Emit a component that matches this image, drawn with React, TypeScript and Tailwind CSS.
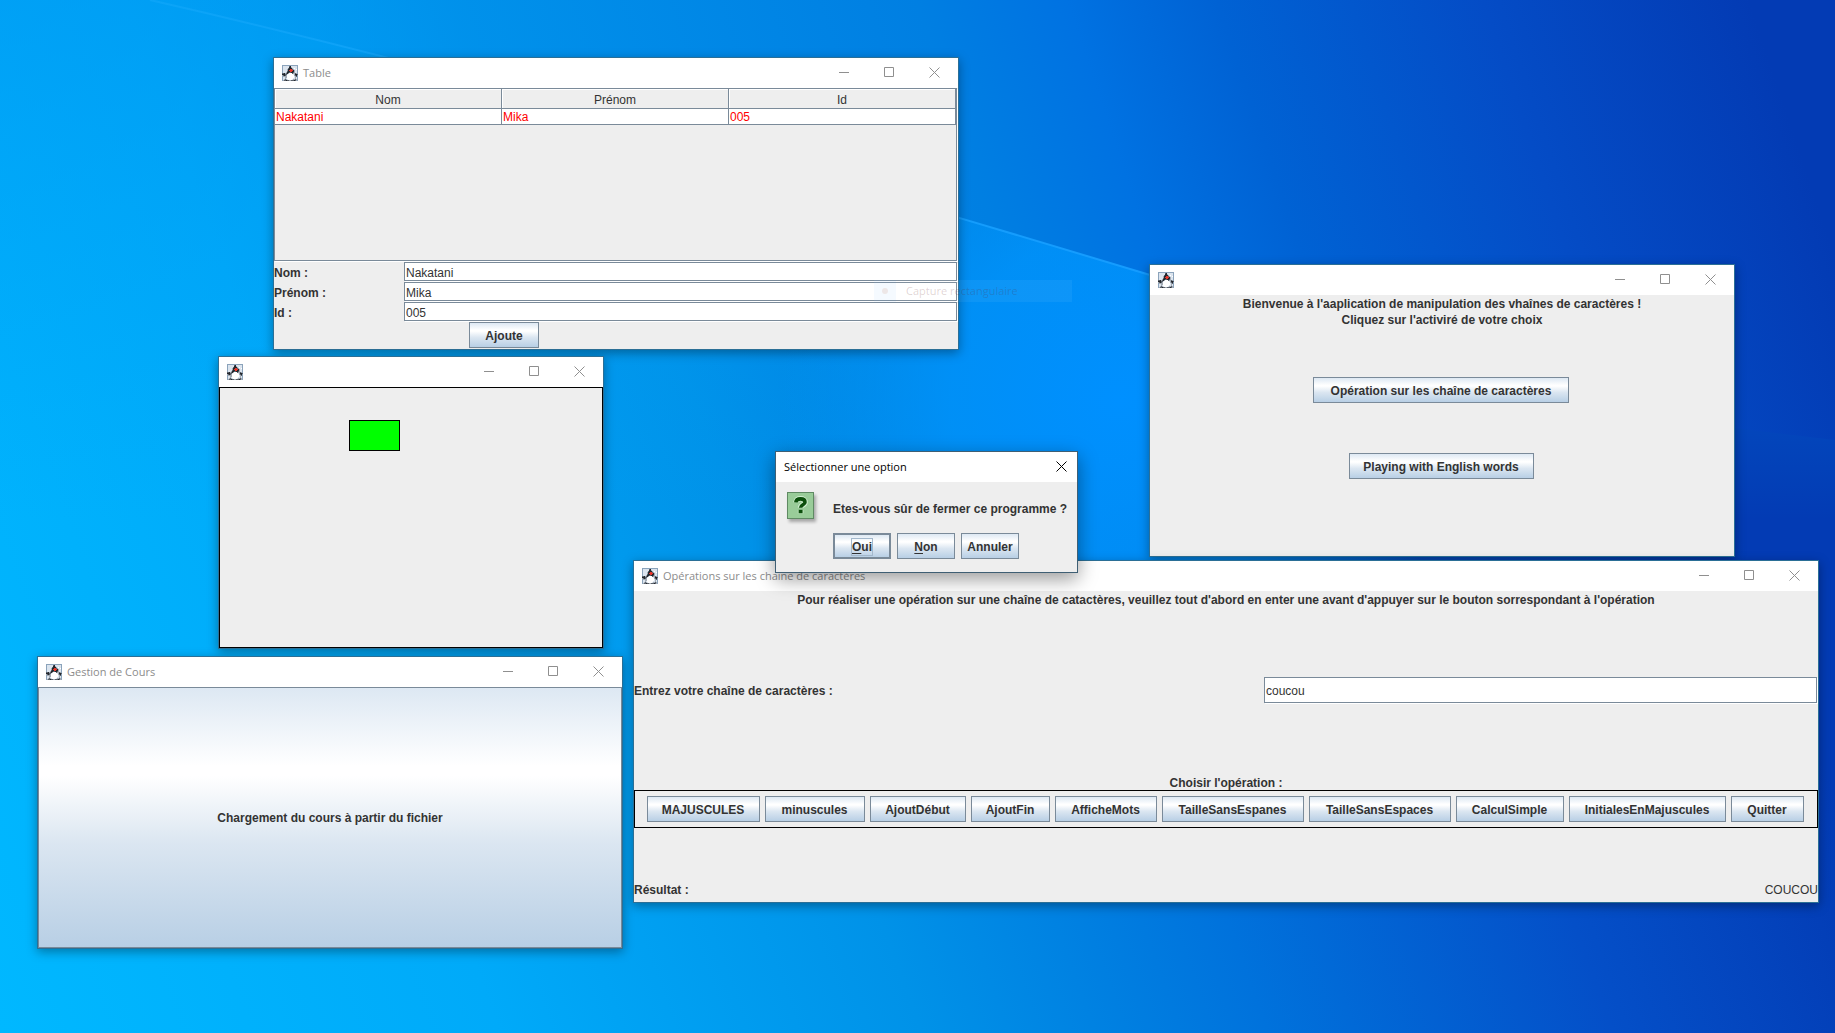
import type { ReactNode } from "react";

const pixels: Record<string, string> = {
  k: "#23272d",
  d: "#596069",
  g: "#a3abb5",
  w: "#ffffff",
  l: "#dbe4ee",
  r: "#e8352a",
  b: "#8ba3bb",
};

const duke = [
  "bbbbbbbbbbbbbbbb",
  "blllllldkllllllb",
  "bllllllkkglllllb",
  "bllllldkkkglwllb",
  "bllllgkkrrdgllwb",
  "bllllgkrrrrkgllb",
  "blllldkkrrkkgllb",
  "blllgkkddkkdgllb",
  "ddkgdkgwwwdggdgb",
  "kkkddlwwwwwlgkkd",
  "gdkdgwwwwwwwgdkb",
  "bggggwwwwwwwlgdb",
  "bllggwwwwwwwlglb",
  "bllglwwwwwwllglb",
  "blgdglwwwwlggdgb",
  "bgddkddggdddkdgb",
];

function JavaIcon() {
  return (
    <svg width="16" height="16" viewBox="0 0 16 16" shapeRendering="crispEdges" aria-hidden="true">
      {duke.flatMap((row, y) =>
        row.split("").map((c, x) => <rect key={`${x}-${y}`} x={x} y={y} width="1" height="1" fill={pixels[c]} />),
      )}
    </svg>
  );
}

function Cross() {
  return (
    <svg width="11" height="11" viewBox="0 0 11 11" fill="none" stroke="currentColor" aria-hidden="true">
      <path d="M.5 .5 10.5 10.5M10.5 .5 .5 10.5" />
    </svg>
  );
}

function WindowControls() {
  return (
    <div className="ml-auto flex h-7 self-start text-[#8f8f8f]">
      <button aria-label="Réduire" className="grid w-[45px] place-items-center">
        <svg width="10" height="10" viewBox="0 0 10 10" stroke="currentColor" aria-hidden="true">
          <path d="M0 5.5H10" />
        </svg>
      </button>
      <button aria-label="Agrandir" className="grid w-[45px] place-items-center">
        <svg width="10" height="10" viewBox="0 0 10 10" fill="none" stroke="currentColor" aria-hidden="true">
          <path d="M.5 .5H9.5V9.5H.5Z" />
        </svg>
      </button>
      <button aria-label="Fermer" className="grid w-[47px] place-items-center">
        <Cross />
      </button>
    </div>
  );
}

function Window({ place, title, children }: { place: string; title?: string; children: ReactNode }) {
  return (
    <section
      className={`absolute flex flex-col border border-[#2b6f96] bg-[#eeeeee] shadow-[0_3px_10px_rgba(0,0,0,0.35)] ${place}`}
    >
      <header className="flex h-[30px] shrink-0 items-center bg-white pb-px pl-2">
        <JavaIcon />
        <h2 className="ml-[5px] pt-px font-['Open_Sans',sans-serif] text-[11px] text-[#8c8c8c]">{title}</h2>
        <WindowControls />
      </header>
      {children}
    </section>
  );
}

const metal =
  "border border-[#7a8a99] bg-[linear-gradient(#dde8f3,#ffffff_30%,#ffffff_34%,#dbe6f1_60%,#b8cfe5)] font-bold";

function MetalButton({ children, size }: { children: ReactNode; size: string }) {
  return <button className={`h-[26px] shrink-0 whitespace-nowrap pt-px ${metal} ${size}`}>{children}</button>;
}

const field =
  "mr-px mb-px min-w-0 flex-1 border border-[#7a8a99] bg-white px-px pt-0.5 shadow-[1px_1px_0_#ffffff] outline-none";

function FormRow({ id, label, value }: { id: string; label: string; value: string }) {
  return (
    <div className="flex h-5">
      <label htmlFor={id} className="w-[130px] pt-px font-bold leading-5">
        {label}
      </label>
      <input id={id} defaultValue={value} className={field} />
    </div>
  );
}

const headCell =
  "h-5 border-r border-b border-[#7a8a99] p-0 pt-0.5 font-normal leading-4 shadow-[inset_1px_1px_0_#ffffff]";
const bodyCell = "h-4 border-r border-b border-[#7a8a99] bg-white p-0 pt-px pl-px leading-[14px] text-[#ff0000]";

function TableWindow() {
  return (
    <Window place="left-[273px] top-[57px] h-[293px] w-[686px]" title="Table">
      <div className="mr-px mb-px flex-1 border border-[#7a8a99] shadow-[1px_1px_0_#ffffff]">
        <table className="w-full table-fixed border-separate border-spacing-0">
          <thead>
            <tr>
              <th className={headCell}>Nom</th>
              <th className={headCell}>Prénom</th>
              <th className={headCell}>Id</th>
            </tr>
          </thead>
          <tbody>
            <tr>
              <td className={bodyCell}>Nakatani</td>
              <td className={bodyCell}>Mika</td>
              <td className={bodyCell}>005</td>
            </tr>
          </tbody>
        </table>
      </div>
      <form onSubmit={(e) => e.preventDefault()}>
        <FormRow id="nom" label="Nom :" value="Nakatani" />
        <FormRow id="prenom" label="Prénom :" value="Mika" />
        <FormRow id="id" label="Id :" value="005" />
        <div className="flex h-[27px] pl-[195px]">
          <MetalButton size="w-[70px]">Ajoute</MetalButton>
        </div>
      </form>
    </Window>
  );
}

function ShapeWindow() {
  return (
    <Window place="left-[218px] top-[356px] h-[293px] w-[386px]">
      <div className="flex-1 border border-black pt-8 pl-[129px]">
        <div className="h-[31px] w-[51px] border border-black bg-[#00ff00]" />
      </div>
    </Window>
  );
}

function CourseWindow() {
  return (
    <Window place="left-[37px] top-[656px] h-[293px] w-[586px]" title="Gestion de Cours">
      <button className={`flex-1 ${metal}`}>Chargement du cours à partir du fichier</button>
    </Window>
  );
}

function WelcomeWindow() {
  return (
    <Window place="left-[1149px] top-[264px] h-[293px] w-[586px]">
      <div className="flex flex-1 flex-col items-center pt-px">
        <p className="text-center font-bold">
          Bienvenue à l'aaplication de manipulation des vhaînes de caractères !
          <br />
          Cliquez sur l'activiré de votre choix
        </p>
        <div className="flex flex-col items-center gap-[50px] pt-[49px] pr-0.5">
          <MetalButton size="w-[256px]">Opération sur les chaîne de caractères</MetalButton>
          <MetalButton size="w-[185px]">Playing with English words</MetalButton>
        </div>
      </div>
    </Window>
  );
}

const operations = [
  ["MAJUSCULES", "w-[113px]"],
  ["minuscules", "w-[100px]"],
  ["AjoutDébut", "w-[96px]"],
  ["AjoutFin", "w-[79px]"],
  ["AfficheMots", "w-[102px]"],
  ["TailleSansEspanes", "w-[142px]"],
  ["TailleSansEspaces", "w-[142px]"],
  ["CalculSimple", "w-[108px]"],
  ["InitialesEnMajuscules", "w-[157px]"],
  ["Quitter", "w-[73px]"],
];

function OperationsWindow() {
  return (
    <Window
      place="left-[633px] top-[560px] h-[343px] w-[1186px]"
      title="Opérations sur les chaine de caractères"
    >
      <div className="flex flex-1 flex-col font-bold">
        <p className="pt-px text-center">
          Pour réaliser une opération sur une chaîne de catactères, veuillez tout d'abord en enter une avant
          d'appuyer sur le bouton sorrespondant à l'opération
        </p>
        <div className="mt-[69px] flex h-[27px]">
          <label htmlFor="chaine" className="w-[630px] pt-px leading-[27px]">
            Entrez votre chaîne de caractères :
          </label>
          <input id="chaine" defaultValue="coucou" className={`font-normal ${field}`} />
        </div>
        <p className="mt-[72px] text-center leading-[14px]">Choisir l'opération :</p>
        <div className="flex h-[38px] items-center justify-center gap-[5px] border border-black pr-0.5">
          {operations.map(([name, width]) => (
            <MetalButton key={name} size={width}>
              {name}
            </MetalButton>
          ))}
        </div>
        <div className="mt-auto flex justify-between pb-1">
          <span>Résultat :</span>
          <span className="font-normal">COUCOU</span>
        </div>
      </div>
    </Window>
  );
}

function ConfirmDialog() {
  return (
    <section
      role="dialog"
      aria-label="Sélectionner une option"
      className="absolute left-[775px] top-[451px] flex h-[122px] w-[303px] flex-col border border-[#3f5f74] bg-[#eeeeee] shadow-[0_6px_18px_rgba(0,0,0,0.4)]"
    >
      <header className="flex h-[30px] items-center bg-white pb-px pl-2">
        <h2 className="pt-px font-['Open_Sans',sans-serif] text-[11px] text-black">Sélectionner une option</h2>
        <button aria-label="Fermer" className="ml-auto grid h-full w-[31px] place-items-center text-black">
          <Cross />
        </button>
      </header>
      <div className="flex gap-[19px] pt-2.5 pl-[11px]">
        <div className="grid size-[27px] place-items-center border border-[#5f8a63] bg-[#99cc99] shadow-[2px_3px_3px_rgba(0,0,0,0.3)]">
          <svg width="19" height="19" viewBox="0 0 19 19" fill="none" aria-hidden="true">
            <g stroke="#d3f0d3" strokeWidth="5.5" strokeLinejoin="round">
              <path d="M5 6.2C5 3.5 7 2.8 9.6 2.8S14 4 14 6.2C14 9 9.6 8.6 9.6 11.8" />
              <path d="M9.6 14V17.4" />
            </g>
            <g stroke="#0b4f0b" strokeWidth="3.6">
              <path d="M4.8 6.4C5 3.6 7 2.9 9.6 2.9S14 4 14 6.2C14 9 9.6 8.6 9.6 11.8" />
              <path d="M9.6 13.8V17.2" strokeWidth="4" />
            </g>
          </svg>
        </div>
        <div className="pt-[9px]">
          <p className="whitespace-nowrap font-bold">Etes-vous sûr de fermer ce programme ?</p>
          <div className="mt-4 flex gap-1.5">
            <button className={`grid h-[26px] w-[58px] place-items-center pt-px ${metal} border-2`}>
              <span className="border border-[#a3b8cc] leading-4">
                <span className="underline decoration-1 underline-offset-2">O</span>ui
              </span>
            </button>
            <MetalButton size="w-[58px]">
              <span className="underline decoration-1 underline-offset-2">N</span>on
            </MetalButton>
            <MetalButton size="w-[58px]">Annuler</MetalButton>
          </div>
        </div>
      </div>
    </section>
  );
}

function Wallpaper() {
  return (
    <svg
      className="absolute inset-0 size-full"
      viewBox="0 0 1835 1033"
      preserveAspectRatio="none"
      aria-hidden="true"
    >
      <defs>
        <linearGradient id="base" x1="0" y1="1033" x2="1700" y2="420" gradientUnits="userSpaceOnUse">
          <stop offset="0" stopColor="#00b8ff" />
          <stop offset=".26" stopColor="#00aaf9" />
          <stop offset=".48" stopColor="#0092e8" />
          <stop offset=".66" stopColor="#0072dc" />
          <stop offset=".84" stopColor="#044fc8" />
          <stop offset="1" stopColor="#033bb4" />
        </linearGradient>
        <linearGradient id="corner" x1="0" y1="0" x2="0" y2="520" gradientUnits="userSpaceOnUse">
          <stop offset="0" stopColor="#0098f2" stopOpacity=".6" />
          <stop offset="1" stopColor="#00a0f8" stopOpacity="0" />
        </linearGradient>
        <linearGradient id="sky" x1="200" y1="250" x2="1700" y2="-250" gradientUnits="userSpaceOnUse">
          <stop offset="0" stopColor="#00a0f6" stopOpacity="0" />
          <stop offset=".2" stopColor="#0090ea" stopOpacity=".8" />
          <stop offset=".48" stopColor="#007fe2" />
          <stop offset=".57" stopColor="#0072e2" />
          <stop offset=".66" stopColor="#0062d4" />
          <stop offset=".82" stopColor="#044cc6" />
          <stop offset=".98" stopColor="#033bb4" />
        </linearGradient>
        <radialGradient id="glow" cx="1120" cy="400" r="340" gradientUnits="userSpaceOnUse">
          <stop offset="0" stopColor="#0090ff" />
          <stop offset=".5" stopColor="#0094fb" stopOpacity=".8" />
          <stop offset="1" stopColor="#0098f4" stopOpacity="0" />
        </radialGradient>
        <linearGradient id="beam" x1="150" y1="0" x2="1150" y2="275" gradientUnits="userSpaceOnUse">
          <stop offset="0" stopColor="#23b0ff" stopOpacity=".3" />
          <stop offset="1" stopColor="#159cff" />
        </linearGradient>
      </defs>
      <rect width="1835" height="1033" fill="url(#base)" />
      <rect width="1835" height="520" fill="url(#corner)" />
      <rect width="1835" height="1033" fill="url(#glow)" />
      <path d="M150 0C500 80 815 174 1150 275L1500 400 1835 440V0Z" fill="url(#sky)" />
      <path d="M150 0C500 80 815 174 1150 275" stroke="url(#beam)" strokeWidth="2" fill="none" />
    </svg>
  );
}

function CaptureGhost() {
  return (
    <div className="pointer-events-none absolute left-[874px] top-[280px] flex h-[22px] w-[198px] items-center bg-white/5 font-['Open_Sans',sans-serif] text-[11px]">
      <span className="grid h-full w-[22px] place-items-center bg-[#3f9fff]/5">
        <span className="size-1.5 rounded-full bg-[#c08060]/15" />
      </span>
      <span className="ml-2.5 whitespace-nowrap text-[#602020]/20">Capture rectangulaire</span>
    </div>
  );
}

export default function App() {
  return (
    <main className="relative h-screen w-full overflow-hidden bg-[#0090ee] font-['Liberation_Sans',Arial,sans-serif] text-xs text-[#333333]">
      <Wallpaper />
      <TableWindow />
      <ShapeWindow />
      <CourseWindow />
      <WelcomeWindow />
      <OperationsWindow />
      <CaptureGhost />
      <ConfirmDialog />
    </main>
  );
}
